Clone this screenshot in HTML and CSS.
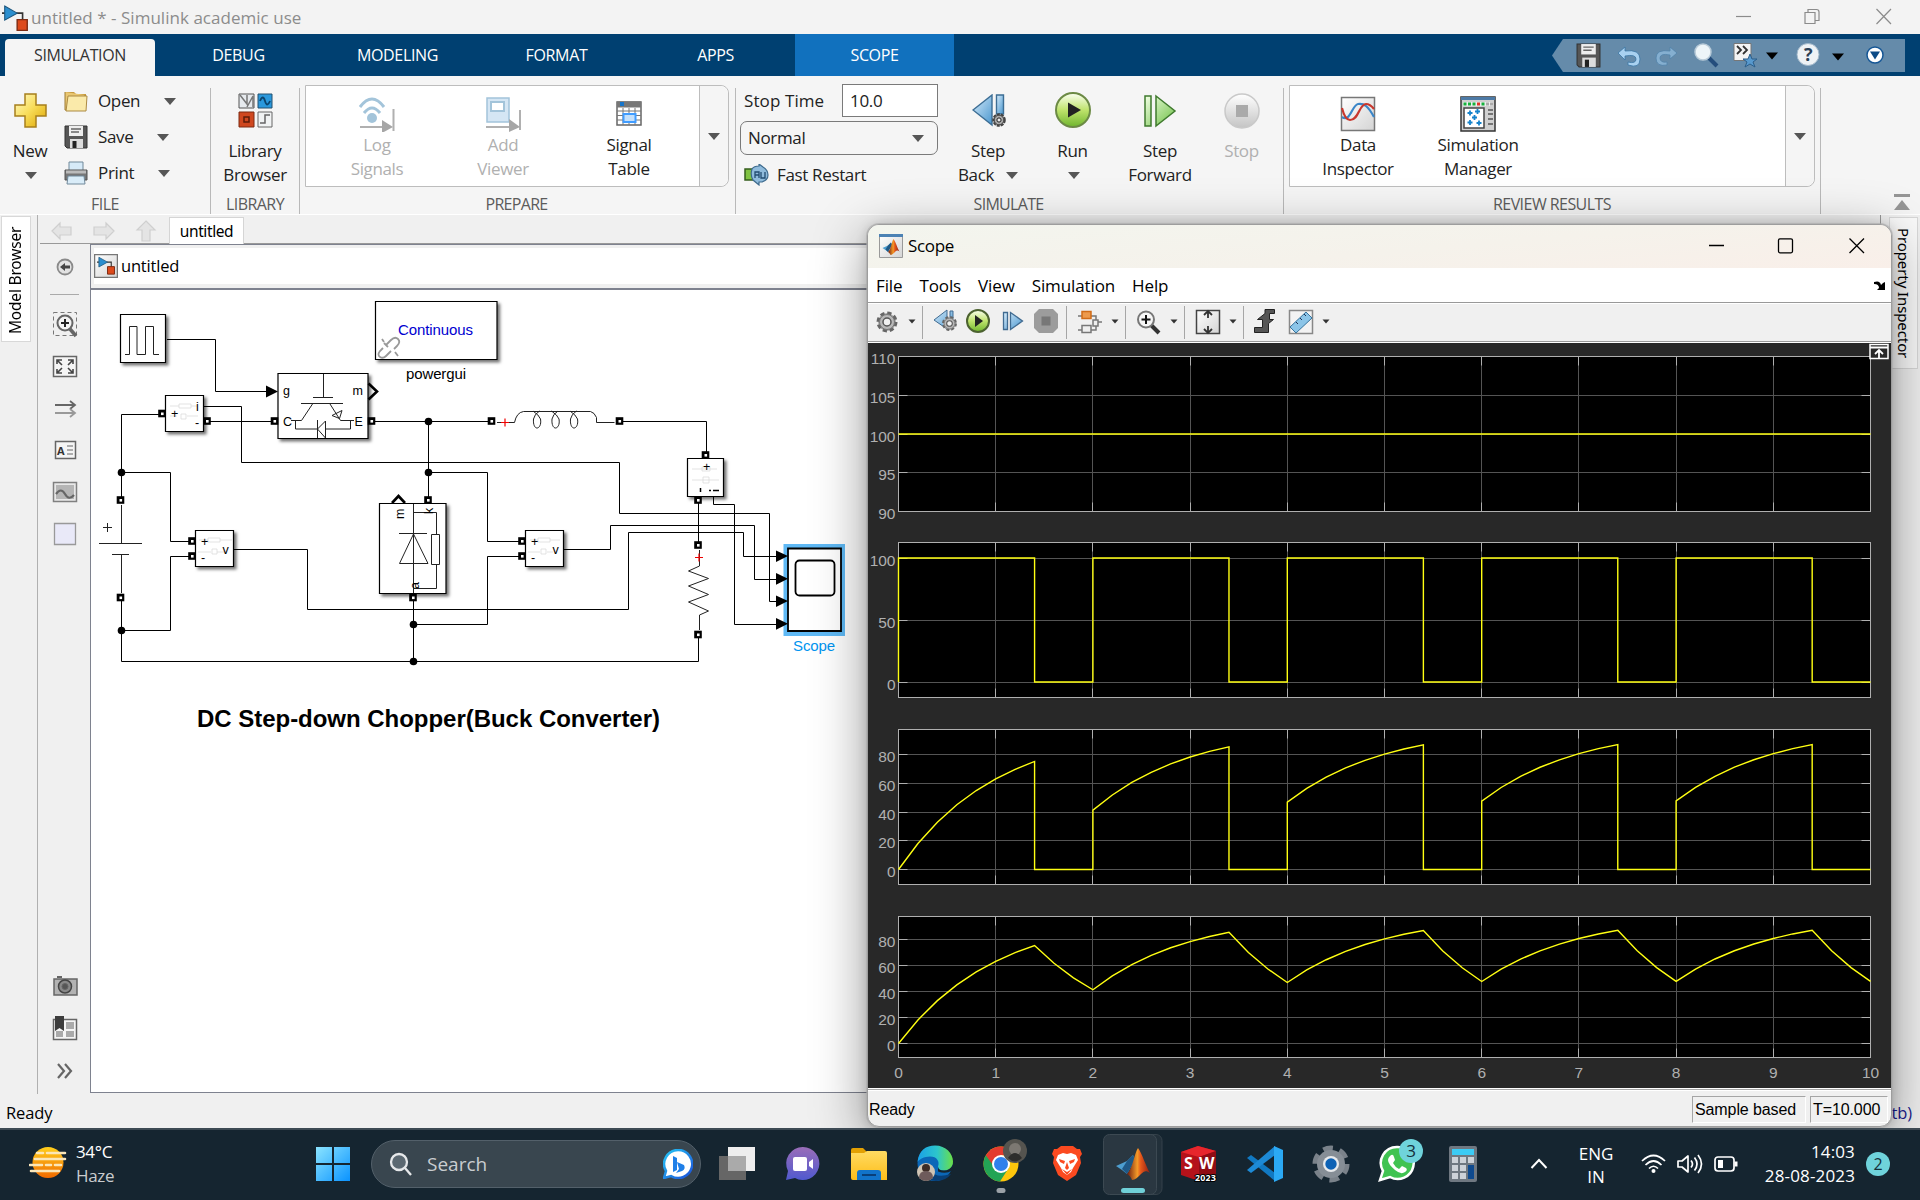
FILE: index.html
```html
<!DOCTYPE html>
<html lang="en">
<head>
<meta charset="utf-8">
<title>untitled * - Simulink academic use</title>
<link rel="stylesheet" href="styles.css">
</head>
<body>
<svg class="defs" width="0" height="0" aria-hidden="true">
  <defs>
    <linearGradient id="gold" x1="0" y1="0" x2="1" y2="1"><stop offset="0" stop-color="#fffbc8"/><stop offset=".5" stop-color="#f8dc58"/><stop offset="1" stop-color="#dca400"/></linearGradient>
    <linearGradient id="steel" x1="0" y1="0" x2="1" y2="1"><stop offset="0" stop-color="#d6ebfa"/><stop offset="1" stop-color="#4a97cf"/></linearGradient>
    <linearGradient id="green" x1="0" y1="0" x2="0" y2="1"><stop offset="0" stop-color="#fbfff2"/><stop offset=".5" stop-color="#bfe36c"/><stop offset="1" stop-color="#6fb52e"/></linearGradient>
    <linearGradient id="leaf" x1="0" y1="0" x2="1" y2="1"><stop offset="0" stop-color="#f1ffe4"/><stop offset="1" stop-color="#6cbf42"/></linearGradient>
    <linearGradient id="silver" x1="0" y1="0" x2="0" y2="1"><stop offset="0" stop-color="#fff"/><stop offset="1" stop-color="#c4c4c4"/></linearGradient>
    <linearGradient id="paper" x1="0" y1="0" x2="1" y2="1"><stop offset="0" stop-color="#fff"/><stop offset="1" stop-color="#d4d4d4"/></linearGradient>
    <linearGradient id="win" x1="0" y1="0" x2="1" y2="1"><stop offset="0" stop-color="#8be4ff"/><stop offset="1" stop-color="#0a93ff"/></linearGradient>
    <linearGradient id="sun" x1="0" y1="0" x2="0" y2="1"><stop offset="0" stop-color="#ffcf1c"/><stop offset="1" stop-color="#f06a00"/></linearGradient>
    <linearGradient id="bing" x1="0" y1="0" x2="1" y2="1"><stop offset="0" stop-color="#26c6f5"/><stop offset="1" stop-color="#1a4fd8"/></linearGradient>
    <linearGradient id="chat" x1="0" y1="0" x2="0" y2="1"><stop offset="0" stop-color="#9a6db8"/><stop offset="1" stop-color="#5059cf"/></linearGradient>
    <linearGradient id="folder" x1="0" y1="0" x2="0" y2="1"><stop offset="0" stop-color="#ffdb62"/><stop offset="1" stop-color="#fdbd19"/></linearGradient>
    <linearGradient id="edge" x1="0" y1="0" x2="1" y2="0"><stop offset="0" stop-color="#1aa0e8"/><stop offset=".55" stop-color="#2cc5cc"/><stop offset="1" stop-color="#6be047"/></linearGradient>
    <linearGradient id="peak" x1="0" y1="0" x2="1" y2="0"><stop offset="0" stop-color="#6b1a10"/><stop offset=".45" stop-color="#f49a28"/><stop offset=".6" stop-color="#e4571b"/><stop offset="1" stop-color="#8d1d12"/></linearGradient>
    <filter id="drop" x="-20%" y="-20%" width="150%" height="150%"><feDropShadow dx="2.5" dy="2.5" stdDeviation="1.6" flood-opacity=".55"/></filter>

    <symbol id="floppy" viewBox="0 0 24 24"><path d="M1 1h22v22H3l-2-2z" fill="#565656" stroke="#333"/><path d="M5 1h14v10H5z" fill="#eee"/><path d="M7 4h10M7 7h8" stroke="#666" stroke-width="1.3"/><path d="M6 14h13v9H6z" fill="#ddd"/><path d="M8.500 16h4v7h-4z" fill="#222"/></symbol>
    <symbol id="stepback" viewBox="0 0 34 34"><path d="M1 16 20 1v30z" fill="url(#steel)" stroke="#3c6d94" stroke-width="1.4"/><path d="M24.500 1h7v19h-7z" fill="url(#steel)" stroke="#3c6d94" stroke-width="1.4"/><circle cx="27" cy="26" r="5.700" fill="#bbb" stroke="#444" stroke-width="2.200" stroke-dasharray="3 1"/><circle cx="27" cy="26" r="4.800" fill="#aaa" stroke="#444"/><circle cx="27" cy="26" r="2.100" fill="#eee" stroke="#222"/></symbol>
    <symbol id="matlab" viewBox="0 0 34 32"><path d="M0 18 11 13l6-6 2 5-8 14-5-4z" fill="#4d9ed0"/><path d="M11 13 6 21l5 5 8-14-2-5z" fill="#1f5886"/><path d="M22 0c4 5 8 19 12 25-4-3-6-2-9 1-3 3-6 6-9 6-1-3-3-5-5-6C17 20 18 6 22 0z" fill="url(#peak)"/></symbol>
    <symbol id="simulink" viewBox="0 0 24 24"><path d="M0 7.500h3M13 7.500h6V15" fill="none" stroke="#333" stroke-width="1.500"/><path d="M2.500 1 14 7.500 2.500 14z" fill="#2c8fcf" stroke="#1d567d"/><path d="M14 13.500h9.300v10H14z" fill="#dd4a1c" stroke="#7d2b13" stroke-width="1.300"/></symbol>
    <symbol id="gear" viewBox="0 0 24 24"><circle cx="12" cy="12" r="9" fill="#aaa" stroke="#666" stroke-width="3" stroke-dasharray="4.200 2.870"/><circle cx="12" cy="12" r="7.500" fill="#b8b8b8" stroke="#777"/><circle cx="12" cy="12" r="4" fill="#f0f0f0" stroke="#555" stroke-width="1.500"/></symbol>
  </defs>
</svg>

<div class="desktop">
  <header class="titlebar">
    <svg class="app-icon" width="26" height="26"><use href="#simulink"/></svg>
    <span class="title">untitled * - Simulink academic use</span>
    <svg class="win-controls" width="156" height="18" fill="none" stroke="#8b8b8b" stroke-width="1.200"><path d="M0 8.500h15"/><path d="M69 4.500h10v11H69zM72 4V1.500h8.500q2.500 0 2.500 2.500v8.500h-3.500"/><path d="m140.500 1 14.500 15m0-15-14.500 15"/></svg>
  </header>

  <nav class="tabs">
    <span class="tab active">SIMULATION</span><span class="tab">DEBUG</span><span class="tab">MODELING</span><span class="tab">FORMAT</span><span class="tab">APPS</span><span class="tab context">SCOPE</span>
    <svg class="quick" width="353" height="33" viewBox="1552 39 353 33">
      <path d="m1552 55.500 11-16.500h342v33h-342z" fill="#658baa"/>
      <use href="#floppy" x="1576" y="43" width="25" height="25"/>
      <path d="m1618 53 7-6v4q15-2 15 8t-12 6v-3q8 2 8-3t-11-3v4z" fill="#a9d1f0" stroke="#3b76a5" stroke-width=".8"/>
      <path d="m1677 53-7-6v4q-14-2-14 7t11 7v-3q-7 1-7-4t10-3v4z" fill="#85afd0" stroke="#5283aa" stroke-width=".8"/>
      <path d="m1709 58 8 8" stroke="#244d7c" stroke-width="4"/><circle cx="1703" cy="52" r="8" fill="#edf5f9" stroke="#b7cad8" stroke-width="1.500"/>
      <path d="M1734 43.500h17v17h-17z" fill="#f4f4f4" stroke="#777"/><path d="m1737 46 4 4-4 4m6-8 4 4-4 4" fill="none" stroke="#333" stroke-width="1.800"/><path d="m1750 54 2 5h5l-4 3 2 5-5-3-5 3 2-5-4-3h5z" fill="#5799ce" stroke="#2c5e8a"/>
      <path d="M1766 52.500h12l-6 7zM1832 53.500h12l-6 7z" fill="#000"/>
      <circle cx="1808" cy="54.500" r="11" fill="#eef2f5" stroke="#a0b7ca"/><text x="1808" y="61" class="help">?</text>
      <circle cx="1875" cy="55" r="8" fill="#fff" stroke="#155695" stroke-width="1.500"/><path d="M1870 51.500h10l-5 8z" fill="#0c4b86"/>
    </svg>
  </nav>

  <section class="ribbon">
    <div class="group g-file">
      <div class="body">
        <div class="big new"><svg width="34" height="36"><path d="M12 2h11v11h10v11H23v11H12V24H2V13h10z" fill="url(#gold)" stroke="#a77f1c" stroke-width="1.500"/></svg><span>New</span><i class="caret"></i></div>
        <div class="rows">
          <div class="row"><svg width="24" height="24"><path d="M1 3h9l2 2h10v3H1z" fill="#c79a3e"/><path d="M1 3v18h20V6" fill="#e9c772" stroke="#9c7a33"/><path d="M4 7h19l-1 15H2z" fill="#faeaaa" stroke="#ac8a43"/></svg><span>Open</span><i class="caret"></i></div>
          <div class="row"><svg width="24" height="24"><use href="#floppy"/></svg><span>Save</span><i class="caret"></i></div>
          <div class="row"><svg width="24" height="24"><path d="M5 1h14v9H5z" fill="#d6eaf8" stroke="#71899a"/><path d="M1 9h22v10H1z" fill="#777" stroke="#555"/><path d="M2 9.500h20v3H2z" fill="#bbb"/><path d="M4 15h16l1 8H3z" fill="#d9ecf8" stroke="#71899a"/></svg><span>Print</span><i class="caret"></i></div>
        </div>
      </div>
      <div class="label">FILE</div>
    </div>
    <i class="sep"></i>
    <div class="group g-lib">
      <div class="body">
        <div class="big lib"><svg width="35" height="36"><path d="M1 2h15v14H1z" fill="#e6eaee" stroke="#555"/><path d="m2 3 7 9V3M9 15l6-11v11" stroke="#777" fill="none" stroke-width="1.500"/><path d="M20 2h14v14H20z" fill="#2a98dc" stroke="#24506e"/><path d="M22 9q3-7 5 0t5 0" fill="none" stroke="#0b456e" stroke-width="1.800"/><path d="M1 20h15v15H1z" fill="#cf471f" stroke="#7c2a12"/><path d="M6 25h5v5H6z" fill="none" stroke="#5c1c0a" stroke-width="1.500"/><path d="M20 20h14v15H20z" fill="#f1f3f4" stroke="#666"/><path d="M22 31h5v-8h5" fill="none" stroke="#666" stroke-width="1.500"/></svg><span>Library<br>Browser</span></div>
      </div>
      <div class="label">LIBRARY</div>
    </div>
    <i class="sep"></i>
    <div class="group g-prep">
      <div class="body">
        <div class="gallery prep">
          <div class="item off"><svg width="36" height="36"><g fill="none" stroke="#a3c4da" stroke-width="3"><path d="M1 11q12-16 24 0M5 17q8-10 16 0"/></g><circle cx="13" cy="22" r="5" fill="#a3c4da"/><path d="M1 31h24M34.500 13v22" stroke="#b0b0b0" stroke-width="2"/><path d="m23 24 11 7-11 6z" fill="#a6a6a6"/></svg><span>Log<br>Signals</span></div>
          <div class="item off"><svg width="36" height="36"><path d="M2 2h22v24H2z" fill="#d5e6f4" stroke="#a3c4da" stroke-width="1.500"/><path d="M6 6h13v9H6z" fill="#fff" stroke="#a3c4da" stroke-width="2"/><path d="M1 31h24M35 14v20" stroke="#b0b0b0" stroke-width="2"/><path d="m24 23 11 8-11 5z" fill="#a6a6a6"/></svg><span>Add<br>Viewer</span></div>
          <div class="item"><svg width="36" height="36"><path d="M6 6h24v23H6z" fill="#fff" stroke="#666" stroke-width="1.500"/><path d="M6 5.500h24v6H6z" fill="#777"/><path d="M9 6h4v4H9z" fill="#1674c9"/><path d="M6 15h24M6 19.500h24M6 24h24M12 12v17M18 12v17M24 12v17" stroke="#777"/><path d="M12.500 18h12v8h-12z" fill="#c4e0fb" stroke="#409cff" stroke-width="2"/></svg><span>Signal<br>Table</span></div>
          <div class="more"><i class="caret"></i></div>
        </div>
      </div>
      <div class="label">PREPARE</div>
    </div>
    <i class="sep"></i>
    <div class="group g-sim">
      <div class="body">
        <div class="settings">
          <div class="stop"><span>Stop Time</span><b class="input">10.0</b></div>
          <div class="select"><span>Normal</span><i class="caret"></i></div>
          <div class="fast"><svg width="25" height="22"><path d="M1 5h8v11H1z" fill="#80c342" stroke="#355d1c" stroke-width="1.500"/><path d="M8 5q2-3 7-3V0l4 3q5 3 5 8t-6 7h-3v3l-6-5q-3-5-1-11z" fill="#8fbbdc" stroke="#3d6a8d" stroke-width="1.200"/><path d="M11 14V8h4v6m-4-3h4m2-3v6h4V8" stroke="#224c70" fill="none" stroke-width="1.300"/></svg><span>Fast Restart</span></div>
        </div>
        <div class="big sback"><svg width="35" height="36"><use href="#stepback" y="2" width="34" height="34"/></svg><span>Step<br>Back <i class="caret"></i></span></div>
        <div class="big run"><svg width="36" height="37"><circle cx="18" cy="18" r="17" fill="url(#green)" stroke="#6c8a45" stroke-width="2"/><path d="m13 10.500 13 7.500-13 7.500z" fill="#222"/></svg><span>Run</span><i class="caret"></i></div>
        <div class="big sfwd"><svg width="34" height="36"><path d="M2 4h6v30H2zM13 4l19 15-19 15z" fill="url(#leaf)" stroke="#3f7a2e" stroke-width="1.500"/></svg><span>Step<br>Forward</span></div>
        <div class="big stopb off"><svg width="36" height="37"><circle cx="18" cy="19" r="17" fill="url(#silver)" stroke="#c9c9c9" stroke-width="1.500"/><path d="M12 13h12v12H12z" fill="#aaa"/></svg><span>Stop</span></div>
      </div>
      <div class="label">SIMULATE</div>
    </div>
    <i class="sep"></i>
    <div class="group g-rev">
      <div class="body">
        <div class="gallery rev">
          <div class="item"><svg width="36" height="36"><path d="M1.500 1.500h33v33h-33z" fill="url(#paper)" stroke="#777" stroke-width="1.500"/><path d="M2 21C10 27 12 9 18 8s10 2 16 13" fill="none" stroke="#3a86c8" stroke-width="2.200"/><path d="M2 12q3 12 8 12c9 0 9-16 16-16q4 0 8 5" fill="none" stroke="#c8372d" stroke-width="2.200"/></svg><span>Data<br>Inspector</span></div>
          <div class="item"><svg width="36" height="36"><path d="M1 1h34v34H1z" fill="#d0d0d0" stroke="#333" stroke-width="1.500"/><path d="M1 1h34v3H1z" fill="#4d7aa6"/><path d="M3 6h30v4H3z" fill="#eee"/><path d="M3.500 6.500h3v3h-3zM8 6.500h3v3H8zM12.500 6.500h3v3h-3zM21.500 6.500h3v3h-3z" fill="#17b23d"/><path d="M17 6.500h3v3h-3z" fill="#e2342b"/><path d="M26 6.500h3v3h-3zM30 6.500h3v3h-3z" fill="#aaa"/><path d="M4 12h20v20H4z" fill="#fff" stroke="#444" stroke-width="1.500"/><path d="M28 14h5m-5 4h5m-5 5h5m-5 5h5" stroke="#555" stroke-width="1.500"/><path d="M7.500 17h5M10 14.500v5M15 15.500h5M17.500 13v5M12 21.500h5M14.500 19v5M7.500 26.500h5M10 24v5M16.500 27h5M19 24.500v5" stroke="#1583cc" stroke-width="1.800"/></svg><span>Simulation<br>Manager</span></div>
          <div class="more"><i class="caret"></i></div>
        </div>
      </div>
      <div class="label">REVIEW RESULTS</div>
    </div>
    <i class="sep"></i>
    <svg class="collapse" width="18" height="18"><path d="M1 1h16v3H1zM9 7l8 10H1z" fill="#969696"/></svg>
  </section>

  <main class="workspace">
    <aside class="left-dock"><span class="vtab">Model Browser</span></aside>
    <div class="editor">
      <div class="docbar">
        <svg width="110" height="24" fill="#e4e4e4" stroke="#cfcfcf" stroke-width="1.200"><path d="m3 13 8-8v4h11v8H11v4zM65 13l-8-8v4H45v8h12v4zM97 3l9 9h-5v11h-8V12h-5z"/></svg>
        <span class="doc">untitled</span>
      </div>
      <div class="editor-main">
        <svg class="palette" width="50" height="850" viewBox="40 244 50 850">
          <g fill="none" stroke="#666">
            <circle cx="65" cy="267" r="7.500" fill="#e2e2e2" stroke="#8a8a8a" stroke-width="1.800"/><path d="m60 267 5-4v2.500h5v3h-5v2.500z" fill="#444" stroke="none"/>
            <path d="M50 294.500h29" stroke="#aaa"/>
            <path d="M53.500 312.500h23v23h-23z" stroke-dasharray="4 3" stroke="#777"/><path d="m70 329 6 7" stroke-width="3.500"/><circle cx="65" cy="323" r="7.500" fill="#f3f3f3" stroke-width="2"/><path d="M61 323h8m-4-4v8" stroke="#222" stroke-width="2"/>
            <path d="M53.500 356.500h23v20h-23z" fill="#f5f5f5" stroke-width="1.500"/><path d="m57 364v-4h5m-5 0 5 5m11-1v-4h-5m5 0-5 5m-11 4v4h5m-5 0 5-5m11 1v4h-5m5 0-5-5" stroke="#444" stroke-width="1.600"/>
            <path d="M55 405h20m-5-4 5 4-5 4" stroke-width="1.800"/><path d="M55 413h20m-5-4 5 4-5 4" stroke="#999" stroke-width="1.800"/>
            <path d="M55.500 441.500h20v17h-20z" fill="#f5f5f5" stroke-width="1.500"/><path d="M67 446h6m-6 4h6m-6 4h6"/>
            <path d="M53.500 482.500h23v19h-23z" fill="#e8e8e8" stroke="#808080" stroke-width="1.500"/><path d="M56 485h18v14H56z" fill="#b5b5b5" stroke="none"/><path d="M56 494q5-7 9 0t9 1" stroke-width="2.200"/>
            <path d="M54.500 523.500h21v21h-21z" fill="#e9e9f8" stroke="#999" stroke-width="1.300"/>
            <path d="M54 979h23v16H54z" fill="#b3b3b3" stroke-width="1.500"/><path d="M57 977h5" stroke-width="2"/><circle cx="65" cy="986.500" r="6.500" fill="#888" stroke="#444" stroke-width="1.500"/><circle cx="65" cy="986.500" r="3" fill="#555"/>
            <path d="M53.500 1019.500h23v20h-23z" fill="#f5f5f5" stroke-width="1.500"/><path d="M66 1022h8v7h-8zM66 1031h8v6h-8zM56 1031h7v6h-7z" fill="#aaa" stroke="none"/><path d="M55 1016h9v15l-4.500-3-4.500 3z" fill="#3c3c3c" stroke="none"/>
            <path d="m58 1064 6 7-6 7m7-14 6 7-6 7" stroke-width="2.200"/>
          </g>
          <text x="57" y="455" class="a-icon">A</text>
        </svg>
        <div class="canvas">
          <div class="crumb"><svg width="24" height="24"><path d="M.5.5h23v23H.500z" fill="url(#paper)" stroke="#777" stroke-width="1.500"/><use href="#simulink" x="3" y="2" width="18" height="19"/></svg><span>untitled</span></div>
          <svg class="diagram" width="777" height="802" viewBox="91 290 777 802" id="diagram">
            <g fill="#fff" stroke="#000" stroke-width="1.200">
              <g filter="url(#drop)"><path d="M120.500 314.500h45v48h-45zM278 373.500h90v65h-90zM165.500 395.500h38v36h-38zM195.500 530.500h38v36h-38zM525.500 530.500h38v36h-38zM379.500 503.500h66.500v90h-66.500zM687.500 458.500h36v38h-36zM375.500 301.500h121.500v58H375.500z"/></g>
              <path d="M783.500 544h61.500v92h-61.500z" fill="#5fb9f5" stroke="none"/><path d="M788 548.500h53v82.500h-53z" stroke-width="1.800"/><rect x="795.500" y="560.500" width="39" height="35" rx="4" stroke-width="1.800"/>
            </g>
            <g class="wire">
              <path d="M167 339.500h48.500v52H268M162 414.500h-40.500V500M121.500 472.500h49v69H192M204 406.500h37.500v56h378v51h150v88h8M208 421.500h66M371 421.500h121M428.500 421.500V500M428.500 472.500h59v69H522M619 421.500h87.500v34M234 549.500h73.500v60h321v-77h115v24H778M564 549.500h46.500v-24h144v54H778M713.500 497v7.500h21v120H778M698.500 500v45M121.500 597v64.500h577V634M121.500 630.500h49v-74H192M413.500 597v64M413.500 624.500h74v-68H522"/>
            </g>
            <g fill="#000">
              <path d="m266 385.500 12 6-12 6zM776 550.500l12 5.500-12 6zM776 573l12 5.700-12 6zM776 595.500l12 5.500-12 6zM776 618l12 5.700-12 6z"/>
              <circle cx="428.500" cy="421.500" r="3.800"/><circle cx="428.500" cy="472.500" r="3.800"/><circle cx="121.500" cy="472.500" r="3.800"/><circle cx="121.500" cy="630.500" r="3.800"/><circle cx="413.500" cy="624.500" r="3.800"/><circle cx="413.500" cy="661.500" r="3.800"/>
            </g>
            <g fill="none" stroke="#000" stroke-width="2.600"><path d="m368.500 383.500 8.500 8-8.500 8M392 503l6.500-7 6.500 7"/></g>
            <g class="thin">
              <path d="M125 354.500h4.500v-28h7.500v28h8.500v-28h8v28h5.500"/>
              <path d="M323.500 374v23.500M313 397.500h20M301 403.500h42M312.500 404l-11 16.500H291M330 404l10.500 16.500H354M332 415.500l10-5-2.500 8zM295.500 420.500v8.500h22M317.500 420v18M325.500 421v17l-8-9zM325.500 429h25v-8.500"/>
              <path d="M121.500 505v38.500M99 543.500h43M112 554.500h17M121.500 554.500V593M107.500 523v9M103 527.500h9"/>
              <path d="M413.500 504v89M413.500 512.500h23v21.500M431.500 534.500h8v30h-8zM436.500 565v23.500h-23M399 533.500h28M413.500 534l-14 29.500H428z"/>
              <path d="M497 422.500h17.500q2-10 9-11h67q4 1 6 6v5h18M533 411q6 4 7.500 8c1 6-1.500 9-3.500 9s-4-3-3.500-9q1-5 6-8M551.500 411q6 4 7.500 8c1 6-1.500 9-3.500 9s-4-3-3.500-9q1-5 6-8M570 411q6 4 7.500 8c1 6-1.500 9-3.500 9s-4-3-3.500-9q1-5 6-8"/>
              <path d="M699.500 550v16l-11 5 20 7.500-20 7.500 20 8.500-20 7.500 20 9-9 4V630"/>
            </g>
            <g class="faint"><path d="M170 406h9m12 0h6M179 404h12v4h-12zM170 416h7m10 0h11M181 414h5v5h-5zM199 540h9m12 0h12M208 538h12v4h-12zM198 552h13M212 549h5v5h-5zM217 552h7M530 540h8m12 0h10M538 538h12v4h-12zM528 552h12M541 549h5v5h-5zM547 552h6M692 469h25M702 467h8v4h-8zM692 480h27M703 477h6v6h-6z"/></g>
            <g class="red"><path d="M501 422.500h8M505 418.500v8M695 557.500h8M699 553.500v8"/></g>
            <g id="ports"></g>
            <g class="tiny">
              <text x="283" y="395">g</text><text x="352.500" y="395">m</text><text x="283" y="426">C</text><text x="354.500" y="426">E</text>
              <text x="196" y="411">i</text><text x="171" y="418">+</text><text x="195" y="427">-</text>
              <text x="201" y="546">+</text><text x="201" y="562">-</text><text x="222.500" y="554">v</text>
              <text x="531" y="546">+</text><text x="531" y="562">-</text><text x="552.500" y="554">v</text>
              <text transform="translate(404 519) rotate(-90)">m</text><text transform="translate(433 514) rotate(-90)">k</text><text transform="translate(419 589) rotate(-90)">a</text><text x="703" y="471">+</text>
            </g>
            <path d="M700.500 488v4M709 490.500h2m2 0h6" stroke="#000" stroke-width="1.500"/>
            <g class="link"><path d="m386 345 5-5q4-4 7-1t-1 7l-3 3M388 347l-4-4M383 348l-3 3q-3 4 0 6t6-1l5-5M395 352l3 4M382 339l2 3"/></g>
            <text x="398" y="335" class="lbl blue" textLength="75">Continuous</text>
            <text x="406" y="379" class="lbl" textLength="60">powergui</text>
            <text x="793" y="651" class="lbl sky" textLength="42">Scope</text>
            <text x="197" y="727" class="note" textLength="463">DC Step-down Chopper(Buck Converter)</text>
          </svg>
        </div>
      </div>
    </div>
    <aside class="right-dock"><span class="vtab">Property Inspector</span></aside>
  </main>
  <footer class="status"><span>Ready</span><span class="solver">tb)</span></footer>

  <div class="scope">
    <div class="s-title">
      <svg width="24" height="24"><path d="M.5.5h23v23H.500z" fill="url(#paper)" stroke="#999"/><path d="M0 0h24v3H0z" fill="#4c82b4"/><use href="#matlab" x="3" y="5" width="18" height="16"/></svg>
      <span>Scope</span>
      <svg class="s-ctl" width="156" height="16" fill="none" stroke="#000" stroke-width="1.300"><path d="M0 7.500h15"/><rect x="69.500" y=".8" width="14" height="14" rx="1.500"/><path d="m140.500.5 14.500 14.500m0-14.500L140.500 15"/></svg>
    </div>
    <div class="s-menu"><span>File</span><span>Tools</span><span>View</span><span>Simulation</span><span>Help</span><svg width="12" height="10"><path d="M0 1q6-2 7 3l2-2 2-1v8H3l2-2Q5 3 0 3z"/></svg></div>
    <svg class="s-tools" width="1023" height="40" viewBox="868 303 1023 38">
      <use href="#gear" x="875" y="310" width="24" height="24"/>
      <path d="M922.500 306v33M1066.500 306v33M1125.500 306v33M1184.500 306v33M1243.500 306v33" stroke="#a6a6a6"/>
      <path d="M908.500 319.500h7l-3.500 4zM1111.500 319.500h7l-3.500 4zM1170.500 319.500h7l-3.500 4zM1229.500 319.500h7l-3.500 4zM1322.500 319.500h7l-3.500 4z" fill="#333"/>
      <path d="m934 320 13-10v19zM950 311h3v8h-3z" fill="url(#steel)" stroke="#406b91"/><use href="#gear" x="941" y="315" width="17" height="17"/>
      <circle cx="978" cy="321" r="11" fill="url(#green)" stroke="#4c6230" stroke-width="2"/><path d="m975 315 8 6-8 6z" fill="#222"/>
      <path d="M1003.500 312.500h4v17h-4zM1010.500 312.500l12 8.500-12 8.500z" fill="url(#steel)" stroke="#406b91" stroke-width="1.300"/>
      <path d="M1039 309h14l5 5v14l-5 5h-14l-5-5v-14z" fill="#9c9c9c"/><path d="M1041.500 316.500h9v9h-9z" fill="#777"/>
      <g fill="#eee" stroke="#777" stroke-width="1.500"><path d="M1078 316h18v14h-18m18-8h6" fill="none"/><path d="M1082 311.500h9v7h-9z" fill="#ed9a4c" stroke="#d06c18"/><path d="M1082 325.500h9v7h-9zM1093 320h5v6h-5z"/></g>
      <path d="m1151 325 8 8" stroke="#333" stroke-width="4"/><circle cx="1146" cy="319.500" r="8" fill="#f6f6f6" stroke="#777" stroke-width="2"/><path d="M1141.500 319.500h9m-4.500-4.500v9" stroke="#111" stroke-width="2"/>
      <path d="M1196.500 310.500h23v23h-23z" fill="url(#paper)" stroke="#444" stroke-width="1.500"/><path d="M1208 311v7m-4-3 4-4 4 4M1208 333v-7m-4 3 4 4 4-4" fill="none" stroke="#333" stroke-width="1.800"/>
      <path d="M1254.500 327.500h8v-8h-5l7.500-6v-4h9.500v4h-5v6h4l-5 4v9h-14z" fill="#555" stroke="#222"/>
      <path d="M1289.500 310.500h23v23h-23z" fill="#f3f3f3" stroke="#888" stroke-width="1.500"/><path d="m1290 327 16-15 6 6-16 15z" fill="#8cc5e8" stroke="#36749e"/><path d="m1296 322 2 2m2-6 2 2m2-6 2 2" stroke="#235"/>
    </svg>
    <svg class="plots" id="plots" width="1023" height="746" viewBox="868 343 1023 745"></svg>
    <div class="s-status"><span class="ready">Ready</span><span class="cell sample">Sample based</span><span class="cell time">T=10.000</span></div>
  </div>

  <footer class="taskbar">
    <svg class="weather" width="38" height="34"><circle cx="19" cy="16.500" r="15.500" fill="url(#sun)"/><path d="M8 7h6m4 0h18M6 13h30M1 19h12m4 0h5m4 0h6M2 25h28" stroke="#fbe6b8" stroke-width="2.600" stroke-linecap="round"/></svg>
    <div class="temp">34°C<br><span>Haze</span></div>
    <svg class="start" width="36" height="36"><path d="M1 1h16v16H1zM19 1h16v16H19zM1 19h16v16H1zM19 19h16v16H19z" fill="url(#win)"/></svg>
    <div class="search"><svg width="24" height="24" fill="none" stroke="#e6e8ea" stroke-width="2.300"><circle cx="10" cy="10" r="8" fill="#5b6871"/><path d="m16 16 6 7"/></svg><span>Search</span><svg class="b" width="30" height="30"><path d="M15 1a14 14 0 1 1-7 26l-7 2 2-7A14 14 0 0 1 15 1z" fill="#fff" stroke="url(#bing)" stroke-width="2.500"/><path d="M10 7l4 2v12l-4 2zM14 13l7 3q2 4-2 6l-6 2 3-4z" fill="#1f7fe8"/></svg></div>
    <div class="apps">
      <svg width="66" height="72" viewBox="0 0 66 72"><path d="M24 19h27v24H24z" fill="#eee"/><path d="M15 28h27v24H15z" fill="#666"/><path d="M24 28h18v15H24z" fill="#aaa"/></svg>
      <svg width="66" height="72" viewBox="0 0 66 72"><path d="M33 19a16.500 16.500 0 1 1-8 31l-9 2 2-9a16.500 16.500 0 0 1 15-24z" fill="url(#chat)"/><rect x="23" y="29" width="14" height="14" rx="2" fill="#fff"/><path d="m39 34 4-3v10l-4-3z" fill="#fff"/></svg>
      <svg width="66" height="72" viewBox="0 0 66 72"><path d="M15 22q0-2 2-2h10l4 4v10H15z" fill="#e2a003"/><path d="M15 25h13l3-2h18q2 0 2 2v27H17q-2 0-2-2z" fill="url(#folder)"/><path d="M21 52v-7q0-3 3-3h18q3 0 3 3v7z" fill="#1173ca"/><path d="M26 47h14" stroke="#093f79" stroke-width="2"/></svg>
      <svg width="66" height="72" viewBox="0 0 66 72"><circle cx="33" cy="35.500" r="17.500" fill="#0b67b8"/><path d="M15.500 34C17 22 24 17.500 33 17.500c11 0 18 8 18 16 0 7-5 9-9 9-5 0-6-2-6-4 2-5-1-10-8-10-6 0-11 3-12.500 5.500z" fill="url(#edge)"/><path d="M36 38.500q0 4 6 4 6 0 9-6l-1 6q-6 4-14 1z" fill="#152530"/><path d="M29 42q4 9 20 4-5 7-15 7-8 0-11-9z" fill="#083f77"/><circle cx="24" cy="44" r="9" fill="#cfc4b4"/><circle cx="24" cy="40" r="4" fill="#3d2c26"/><path d="M17 50q0-7 7-7t7 7q-3 3-7 3t-7-3z" fill="#6e5b5b"/></svg>
      <svg width="66" height="72" viewBox="0 0 66 72"><circle cx="33" cy="36" r="17.500" fill="#fdc60c"/><path d="M33 36 17.800 27.300A17.500 17.500 0 0 0 32 53.500l9-14z" fill="#23a455"/><path d="M17.800 27.300a17.500 17.500 0 0 1 30.400 0H33l-8 10z" fill="#e33b2e"/><circle cx="33" cy="36" r="9" fill="#fff"/><circle cx="33" cy="36" r="7" fill="#3080ec"/><circle cx="47" cy="23" r="12" fill="#55544f"/><circle cx="47" cy="21" r="6" fill="#7c7872"/><path d="M40 30q7-10 14 0-7 7-14 0z" fill="#2e2e2c"/><rect x="28.500" y="60" width="9" height="5" rx="2.500" fill="#9aa1a7"/></svg>
      <svg width="66" height="72" viewBox="0 0 66 72"><path d="M23 21l4-3h12l4 3h3l2 5-2 3 1 6-5 12-9 6-9-6-5-12 1-6-2-3 2-5z" fill="#fb4a20"/><path d="m24 27 5-2 4 1 4-1 5 2 2 5-5 8-2 4-4 3-4-3-2-4-5-8z" fill="#fff"/><path d="m25 31 6 2-1 3-4-2zM41 31l-6 2 1 3 4-2zM33 34l2 6-2 2-2-2zM28 41l5 3 5-3-5 6z" fill="#fb4a20"/></svg>
      <svg width="66" height="72" viewBox="0 0 66 72"><rect x="9" y="6.500" width="53" height="60" rx="6" fill="#22303a" stroke="#34414a"/><rect x="3.500" y="6.500" width="53" height="60" rx="6" fill="#2a3741" stroke="#3c4952"/><use href="#matlab" x="16" y="19" width="34" height="34"/><rect x="21" y="60" width="24" height="5" rx="2.500" fill="#70d0d8"/></svg>
      <svg width="66" height="72" viewBox="0 0 66 72"><path d="m15 24 17-6 18 5v23l-17 7-18-6z" fill="#b4121a"/><path d="m15 24 17-6 18 5-17 6z" fill="#e7262c"/><path d="m33 29 17-6v23l-17 7z" fill="#8f0d14"/><text x="18" y="41" class="sw">S</text><text x="33" y="41" class="sw">W</text><text x="29" y="53" class="yr" textLength="21">2023</text></svg>
      <svg width="66" height="72" viewBox="0 0 66 72"><path d="m15 30 4-3 24 18v8z" fill="#1179c2"/><path d="m15 42 4 3 24-18v-9z" fill="#1d8ad6"/><path d="m42 18 9 4v28l-9 4V18z" fill="#2ba9f4"/></svg>
      <svg width="66" height="72" viewBox="0 0 66 72"><circle cx="33" cy="36" r="14" fill="none" stroke="#7a828a" stroke-width="9" stroke-dasharray="8.600 6.060"/><circle cx="33" cy="36" r="14" fill="#868e96"/><circle cx="33" cy="36" r="8" fill="#e8eaec"/><circle cx="33" cy="36" r="5.700" fill="#0d62b5"/></svg>
      <svg width="66" height="72" viewBox="0 0 66 72"><path d="M33 19a16 16 0 1 1-7 30l-10 3 3-9a16 16 0 0 1 14-24z" fill="#40c351" stroke="#fff" stroke-width="2.500"/><path d="M26 28q3-3 4 1l1 3-2 3q2 4 6 6l3-3 4 2q2 2-1 4-4 3-10-2-7-6-7-10 0-2 2-4z" fill="#fff"/><circle cx="47" cy="23" r="12" fill="#6fd3db"/><text x="47" y="29" class="badge">3</text></svg>
      <svg width="66" height="72" viewBox="0 0 66 72"><rect x="19" y="18" width="28" height="36" rx="2" fill="#6f7881"/><path d="M22 21h22v6H22z" fill="#3ccbf4"/><path d="M22 29h6v6h-6zM30 29h6v6h-6zM38 29h6v6h-6zM22 37h6v6h-6zM30 37h6v6h-6zM22 45h6v6h-6zM30 45h6v6h-6z" fill="#cdd2d8"/><path d="M38 37h6v14h-6z" fill="#0f4a8e"/></svg>
    </div>
    <svg class="up" width="18" height="12" fill="none" stroke="#fff" stroke-width="2"><path d="m1.500 10 7.500-8 7.500 8"/></svg>
    <div class="lang">ENG<br>IN</div>
    <svg class="tray" width="98" height="24" fill="none" stroke="#fff" stroke-width="1.700"><path d="M1 9q11.500-11 23 0M4.500 13q8-8 16 0M8 16.500q4.500-4.500 9 0"/><circle cx="12.500" cy="19" r="2" fill="#fff" stroke="none"/><path d="M37 9h4l6-5v16l-6-5h-4zM50 8.500q3 3.500 0 7M53.500 5.500q5 6.500 0 13M57 3q7 9 0 18" stroke-linejoin="round"/><rect x="74" y="5" width="19" height="14" rx="3"/><path d="M77 8h5v8h-5z" fill="#fff" stroke="none"/><path d="M95 9.500v5" stroke-width="3"/></svg>
    <div class="clock">14:03<br>28-08-2023</div>
    <div class="notif">2</div>
  </footer>
</div>
<script src="plots.js"></script>
</body>
</html>
```
FILE: styles.css
```css
* { box-sizing: border-box; }
body { margin: 0; overflow: hidden; background: #f0f0f0; font: 17px/24px "Open Sans", "Noto Sans", sans-serif; letter-spacing: -.35px; color: #222; }
svg { display: block; flex: none; }
.defs { position: absolute; }
.desktop { position: relative; width: 1920px; height: 1200px; display: flex; flex-direction: column; overflow: hidden; }

/* Main window title */
.titlebar { height: 34px; background: #f3f3f3; display: flex; align-items: center; padding: 1px 28px 0 2px; }
.title { margin-left: 3px; color: #8c8c8c; letter-spacing: .03px; }
.win-controls { margin-left: auto; margin-top: -1px; }

/* Toolstrip tabs */
.tabs { height: 42px; background: #004071; display: flex; padding-right: 15px; flex: none; }
.tab { width: 159px; display: flex; align-items: center; justify-content: center; color: #fff; font-size: 16px; letter-spacing: -.35px; }
.tab.active { width: 150px; margin: 5px 4px 0 5px; background: #f5f5f5; color: #333; border-radius: 4px 4px 0 0; padding-bottom: 6px; }
.tab.context { background: #1171be; }
.quick { margin: 5px 0 0 auto; }
.help { font: bold 18px "Open Sans", sans-serif; text-anchor: middle; fill: #2b4055; }

/* Toolstrip */
.ribbon { height: 139px; flex: none; background: #f5f5f5; border-bottom: 1px solid #fff; display: flex; }
.sep { width: 1px; margin-top: 12px; background: #b9b9b9; }
.group { display: flex; flex-direction: column; }
.g-file { width: 210px; } .g-lib { width: 88px; } .g-prep { width: 435px; } .g-sim { width: 547px; } .g-rev { width: 536px; }
.body { height: 118px; display: flex; }
.label { height: 20px; line-height: 20px; text-align: center; font-size: 16px; letter-spacing: -.55px; color: #5c5c5c; }
.g-sim .label, .g-prep .label { padding-right: 2px; letter-spacing: -.7px; }
.caret { display: inline-block; border: 6px solid transparent; border-top: 7px solid #565656; border-bottom: 0; }
.big { display: flex; flex-direction: column; align-items: center; text-align: center; padding-top: 16px; white-space: nowrap; }
.big > svg { margin-bottom: 10px; height: 37px; }
.big > .caret { margin-top: 9px; margin-left: 2px; }
.new { width: 60px; } .lib { width: 88px; }
.rows { padding: 7px 0 0 4px; }
.row { height: 36px; display: flex; align-items: center; gap: 10px; }
.row .caret { margin-left: 14px; }
.off { color: #b0b0b0; }
.gallery { display: flex; height: 102px; margin: 9px 0 0 5px; border: 1px solid #bdbdbd; border-radius: 0 8px 8px 0; background: #fff; }
.prep { width: 424px; padding-left: 8px; } .rev { width: 526px; padding-left: 8px; }
.item { width: 126px; padding-top: 10px; display: flex; flex-direction: column; align-items: center; text-align: center; }
.item svg { margin-bottom: 1px; }
.rev .item { width: 120px; }
.more { margin-left: auto; width: 29px; background: #f5f5f5; border-left: 1px solid #bdbdbd; border-radius: 0 8px 8px 0; display: flex; align-items: center; justify-content: center; }
.settings { width: 202px; padding: 8px 0 0 4px; display: flex; flex-direction: column; }
.stop { display: flex; align-items: center; justify-content: space-between; padding-left: 4px; letter-spacing: .1px; }
.input { width: 96px; height: 33px; line-height: 32px; padding-left: 7px; background: #fff; border: 1px solid #7a7a7a; font-weight: 400; letter-spacing: -.3px; }
.select { height: 34px; margin-top: 4px; border: 1px solid #7a7a7a; border-radius: 7px; display: flex; align-items: center; justify-content: space-between; padding: 0 13px 0 7px; }
.fast { display: flex; align-items: center; gap: 8px; margin: 8px 0 0 4px; }
.sback { width: 100px; }
.sback .caret { margin-left: 8px; vertical-align: 2px; }
.sback svg { margin-left: 3px; }
.run { width: 69px; } .sfwd { width: 106px; } .stopb { width: 57px; }
.collapse { margin: 117px 0 0 72px; }

/* Workspace */
.workspace { height: 879px; flex: none; display: flex; }
.left-dock { width: 38px; border-right: 1px solid #b0b0b0; padding: 1px 0 0 1px; }
.vtab { display: flex; align-items: center; justify-content: center; writing-mode: vertical-rl; width: 30px; height: 126px; background: #fff; border: 1px solid #d8d8d8; font: 15.500px "Noto Sans", sans-serif; letter-spacing: -.2px; color: #000; white-space: nowrap; }
.left-dock .vtab { transform: rotate(180deg); padding-bottom: 2px; padding-left: 2px; }
.right-dock { width: 40px; border-left: 1px solid #999; padding: 2px 0 0 8px; }
.right-dock .vtab { width: 29px; height: 152px; background: #fafafa; font-size: 15px; letter-spacing: -.1px; }
.editor { width: 1842px; padding-left: 2px; }
.docbar { height: 29px; border-bottom: 1px solid #999; display: flex; padding: 3px 0 0 9px; }
.doc { margin: -1px 0 0 10px; width: 75px; height: 27px; padding-top: 1px; background: #fff; border: 1px solid #d5d5d5; border-bottom: 0; text-align: center; font-family: "Noto Sans", sans-serif; font-size: 15.500px; color: #000; letter-spacing: -.4px; }
.editor-main { display: flex; }
.canvas { width: 1790px; height: 849px; border: 1px solid #7e828f; background: #fff; }
.crumb { height: 43px; margin-bottom: 2px; border: solid #f0f0f0; border-width: 3px 0 4px 3px; box-shadow: 0 2px #7e828f; display: flex; align-items: center; gap: 3px; font-size: 16.500px; color: #000; letter-spacing: -.2px; }
.diagram { overflow: hidden; }
.a-icon { font: bold 11px "Open Sans", sans-serif; fill: #333; }
.wire { fill: none; stroke: #000; stroke-width: 1; }
.thin { fill: none; stroke: #222; stroke-width: 1; }
.faint { fill: none; stroke: #dcdcdc; stroke-width: .8; }
.red { stroke: #e00; stroke-width: 1.200; }
.link { fill: none; stroke: #999; stroke-width: 1.800; }
.tiny { font: 12.500px "Liberation Sans", sans-serif; letter-spacing: 0; fill: #000; }
.lbl { font: 15px "Liberation Sans", sans-serif; letter-spacing: 0; fill: #000; }
.blue { fill: #0000d0; } .sky { fill: #0094f0; }
.note { font: bold 24px "Liberation Sans", sans-serif; letter-spacing: 0; fill: #000; }
.status { height: 34px; flex: none; display: flex; justify-content: space-between; align-items: center; padding: 3px 8px 0 6px; font-size: 16.500px; letter-spacing: -.1px; color: #000; }
.solver { color: #1a1a8c; }

/* Floating scope window */
.scope { position: absolute; left: 867px; top: 224px; width: 1025px; height: 903px; border: 1px solid #9d9d9d; border-radius: 12px; overflow: hidden; background: #f0f0f0; box-shadow: 0 0 0 1px #aaa9, 0 14px 54px rgba(0,0,0,.42), 0 0 12px rgba(0,0,0,.15); color: #000; display: flex; flex-direction: column; }
.s-title { height: 43px; flex: none; background: linear-gradient(175deg, #f3f5ee, #f5f2eb 55%, #f9efe9); display: flex; align-items: center; padding: 0 26px 2px 11px; gap: 5px; }
.s-ctl { margin-left: auto; }
.s-menu { height: 34px; flex: none; background: #fff; display: flex; align-items: center; padding: 1px 5px 0 8px; gap: 17px; letter-spacing: -.12px; }
.s-menu svg { margin-left: auto; }
.s-tools { border-top: 1px solid #999; border-bottom: 1px solid #999; box-shadow: inset 0 1px #fff; }
.plots { border-top: 1px solid #fff; background: #282828; }
.axis { font: 15.500px "Liberation Sans", sans-serif; letter-spacing: 0; fill: #b0b0b0; }
.s-status { height: 38px; border-top: 1px solid #fff; box-shadow: inset 0 1px #a8a8a8, inset 0 2px #fff; display: flex; align-items: center; font: 16px "Liberation Sans", sans-serif; letter-spacing: -.1px; padding: 4px 3px 0 1px; gap: 4px; }
.ready { margin-right: auto; }
.cell { height: 27px; line-height: 25px; border: 1px solid; border-color: #a5a5a5 #fff #fff #a5a5a5; padding-left: 2px; }
.sample { width: 114px; } .time { width: 78px; }

/* Taskbar */
.taskbar { position: relative; height: 72px; flex: none; background: #152530; border-top: 2px solid #3d4a54; color: #fff; display: flex; align-items: flex-start; }
.weather { margin: 16px 0 0 29px; }
.temp { margin: 10px 0 0 9px; width: 60px; }
.temp span { color: #c9ccce; }
.start { margin: 16px 0 0 179px; }
.search { width: 330px; height: 48px; margin: 10px 0 0 20px; border: 1px solid #53606a; border-radius: 24px; background: #39464f; display: flex; align-items: center; padding: 0 7px 0 17px; font-size: 19px; color: #c9cdd0; }
.search span { margin-left: 14px; letter-spacing: 0; }
.b { margin-left: auto; }
.apps { display: flex; margin: -2px 0 0 3px; }
.sw { font: bold 16px "Open Sans", sans-serif; fill: #fff; letter-spacing: 0; }
.yr { font: bold 9px/9px "Open Sans", sans-serif; fill: #fff; stroke: #000; stroke-width: 2px; paint-order: stroke; letter-spacing: 0; }
.badge { font: 17px "Open Sans", sans-serif; fill: #15303a; text-anchor: middle; }
.up { margin: 28px 0 0 34px; }
.lang { margin: 12px 0 0 28px; width: 40px; text-align: center; line-height: 23px; letter-spacing: 0; }
.tray { margin: 22px 0 0 25px; }
.clock { margin: 10px 0 0 9px; width: 107px; text-align: right; white-space: nowrap; letter-spacing: .15px; }
.notif { margin: 22px 0 0 11px; width: 24px; height: 24px; border-radius: 50%; background: #6fd3db; color: #15303a; text-align: center; font-size: 16px; }
```
FILE: plots.js
```js
const NS = 'http://www.w3.org/2000/svg';
function add(parent, tag, attrs, text) {
  const el = document.createElementNS(NS, tag);
  for (const k in attrs) el.setAttribute(k, attrs[k]);
  if (text !== undefined) el.textContent = text;
  parent.appendChild(el);
}

// Electrical port squares on the block diagram
const ports = document.getElementById('ports');
[[274.5, 421], [371.5, 421], [162, 413.5], [207, 421], [120.5, 500], [120.5, 597.5],
 [192, 541], [192, 556], [428, 500], [413, 597.5], [522, 541], [522, 556],
 [491.5, 421], [619.5, 421], [705.5, 455], [698, 500], [698, 545], [698, 634.5]
].forEach(([x, y]) => {
  add(ports, 'rect', { x: x - 3.8, y: y - 3.8, width: 7.6, height: 7.6, fill: '#000' });
  add(ports, 'rect', { x: x - 1, y: y - 1, width: 2.6, height: 2.6, fill: '#fff' });
});

// Output of the chopper: first-order charge and discharge, period 2 s, duty 0.7
const X0 = 898.5, X1 = 1870.5, STEP = (X1 - X0) / 10;
const px = t => X0 + t * STEP;
const pts = { current: [], pulse: [], gated: [] };
pts.pulse.push([0, 0]);
let level = 0;
for (let k = 0; k < 5; k++) {
  const t0 = 2 * k, start = level;
  pts.pulse.push([t0, 100], [t0 + 1.4, 100], [t0 + 1.4, 0], [t0 + 2, 0]);
  for (let i = 0; i <= 7; i++) {
    level = 100 - (100 - start) * Math.exp(-i / 5);
    pts.current.push([t0 + i / 5, level]);
    pts.gated.push([t0 + i / 5, level]);
  }
  pts.gated.push([t0 + 1.4, 0], [t0 + 2, 0]);
  const top = level;
  for (let i = 1; i <= 3; i++) {
    level = top * Math.exp(-i / 5);
    pts.current.push([t0 + 1.4 + i / 5, level]);
  }
}

const plots = document.getElementById('plots');
function axes(top, bottom, ticks, toY, data) {
  add(plots, 'rect', { x: X0, y: top, width: X1 - X0, height: bottom - top, fill: '#000' });
  let grid = '', marks = '';
  for (let i = 1; i < 10; i++) {
    const x = Math.floor(px(i)) + .5;
    grid += `M${x} ${top}V${bottom}`;
    marks += `M${x} ${top}v9M${x} ${bottom}v-9`;
  }
  ticks.forEach(v => {
    const y = Math.floor(toY(v)) + .5;
    if (y > top && y < bottom) {
      grid += `M${X0} ${y}H${X1}`;
      marks += `M${X0} ${y}h9M${X1} ${y}h-9`;
    }
    add(plots, 'text', { x: 895.5, y: y + 7, class: 'axis', 'text-anchor': 'end' }, v);
  });
  add(plots, 'path', { d: grid, stroke: '#545454', fill: 'none' });
  add(plots, 'path', { d: marks, stroke: '#afafaf', fill: 'none' });
  add(plots, 'rect', { x: X0, y: top, width: X1 - X0, height: bottom - top, fill: 'none', stroke: '#afafaf' });
  add(plots, 'polyline', { points: data.map(([t, v]) => px(t) + ',' + toY(v)).join(' '), fill: 'none', stroke: '#ffff12', 'stroke-width': 1.4 });
}
axes(356.5, 511.5, [110, 105, 100, 95, 90], v => 434 - (v - 100) * 7.77, [[0, 100], [10, 100]]);
axes(542.5, 697.5, [100, 50, 0], v => 682 - v * 1.24, pts.pulse);
axes(729.5, 884.5, [80, 60, 40, 20, 0], v => 869.5 - v * 1.434, pts.gated);
axes(916.5, 1057.5, [80, 60, 40, 20, 0], v => 1043.5 - v * 1.3, pts.current);
for (let i = 0; i <= 10; i++) add(plots, 'text', { x: px(i), y: 1078, class: 'axis', 'text-anchor': 'middle' }, i);
add(plots, 'path', { d: 'M1870 344.500h18v14h-18z', fill: '#282828', stroke: '#fff', 'stroke-width': 1.5 });
add(plots, 'path', { d: 'M1870 347.500h18M1879 358v-7m-4 3 4-4 4 4', fill: 'none', stroke: '#fff', 'stroke-width': 1.8 });
```
